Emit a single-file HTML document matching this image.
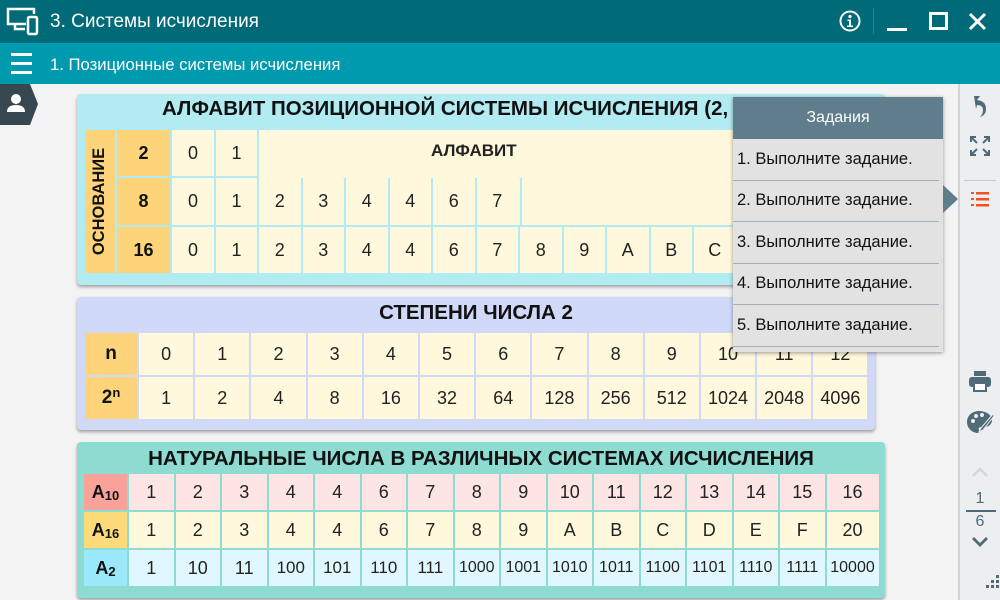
<!DOCTYPE html>
<html><head><meta charset="utf-8"><style>
*{box-sizing:border-box;margin:0;padding:0}
body{width:1000px;height:600px;overflow:hidden;background:#f3f3f3;font-family:"Liberation Sans",sans-serif;position:relative}
.a{position:absolute}
.top{left:0;top:0;width:1000px;height:43px;background:#006a78;color:#fff;font-size:19px}
.sub{left:0;top:43px;width:1000px;height:41px;background:#009aae;color:#fff;font-size:16.7px}
.side{left:958px;top:84px;width:42px;height:516px;background:#eceef0;border-left:2px solid #cfd3d6}
.panel{border-radius:4px;box-shadow:0 2px 3px rgba(0,0,0,.35)}
.ttl{font-weight:bold;font-size:20.5px;text-align:center;color:#111;white-space:nowrap}
.row{display:flex;gap:2px}
.c{background:#fff8dc;display:flex;align-items:center;justify-content:center;font-size:18px;color:#222}
.o{background:#fdd47a;font-weight:bold;color:#111}
sub{font-size:13px;position:relative;top:3px;vertical-align:baseline}
.pop{left:733px;top:97px;width:210px;height:255px;background:#e2e2e2;box-shadow:0 1px 4px rgba(0,0,0,.4)}
.pop .h{height:42px;background:#607d8b;color:#fff;font-size:16px;display:flex;align-items:center;justify-content:center}
.pop .i{height:41.5px;font-size:16.5px;color:#111;padding-left:4px;display:flex;align-items:center;border-bottom:1.5px solid #9fb2ba;margin:0 4px 0 0;white-space:nowrap}
</style></head><body>
<div class="a top">
 <svg class="a" style="left:5px;top:6px" width="34" height="30" viewBox="0 0 34 30" fill="none" stroke="#fff" stroke-width="2.5"><path d="M21 18H3V3h26v5M10 18v5h10"/><rect x="23" y="11" width="9" height="17" rx="1.5"/></svg>
 <span class="a" style="left:50px;top:11px">3. Системы исчисления</span>
 <svg class="a" style="left:839px;top:10px" width="22" height="22" viewBox="0 0 22 22"><circle cx="11" cy="11" r="9.5" fill="none" stroke="#fff" stroke-width="2"/><circle cx="11" cy="6.5" r="1.6" fill="#fff"/><path d="M8.5 9.5h3.5v6h2v1.5h-6v-1.5h2v-4.5h-1.5z" fill="#fff"/></svg>
 <div class="a" style="left:873px;top:8px;width:1px;height:26px;background:#1f8592"></div>
 <div class="a" style="left:887px;top:28px;width:20px;height:3px;background:#fff"></div>
 <div class="a" style="left:929px;top:12px;width:19px;height:18px;border:3px solid #fff"></div>
 <svg class="a" style="left:968px;top:12px" width="19" height="19" viewBox="0 0 19 19" stroke="#fff" stroke-width="3"><path d="M2 2l15 15M17 2L2 17"/></svg>
</div>
<div class="a sub">
 <div class="a" style="left:11px;top:10px;width:21px;height:3px;background:#fff;box-shadow:0 9px 0 #fff,0 18px 0 #fff"></div>
 <span class="a" style="left:50px;top:12px">1. Позиционные системы исчисления</span>
</div>
<svg class="a" style="left:0;top:84px" width="40" height="42"><path d="M0 0H30L38 20L30 41H0z" fill="#37474f"/><circle cx="16" cy="15" r="5" fill="#fff"/><path d="M7 28q0-7 9-7t9 7z" fill="#fff"/></svg>

<!-- panel 1 -->
<div class="a panel" style="left:77px;top:94px;width:808px;height:191px;background:#b2ebf2"></div>
<div class="a ttl" style="left:162px;top:97px">АЛФАВИТ ПОЗИЦИОННОЙ СИСТЕМЫ ИСЧИСЛЕНИЯ (2, 8, 16)</div>
<div class="a c o" style="left:85px;top:130px;width:30px;height:143px"><span style="transform:rotate(-90deg);white-space:nowrap;font-size:16.5px">ОСНОВАНИЕ</span></div>
<div class="a c o" style="left:117px;top:130px;width:53px;height:46px">2</div>
<div class="a c o" style="left:117px;top:178px;width:53px;height:47px">8</div>
<div class="a c o" style="left:117px;top:227px;width:53px;height:46px">16</div>
<div class="a c" style="left:259px;top:130px;width:609px;height:95px;align-items:flex-start;padding-top:11px;font-weight:bold;font-size:17px;justify-content:flex-start;padding-left:172px">АЛФАВИТ</div>
<div class="a row" style="left:172px;top:130px;height:46px"><div class="c" style="width:42px">0</div><div class="c" style="width:41px">1</div></div>
<div class="a row" style="left:172px;top:178px;height:47px;background:#b2ebf2"><div class="c" style="width:42px">0</div><div class="c" style="width:41px">1</div><div class="c" style="width:41.5px">2</div><div class="c" style="width:41.5px">3</div><div class="c" style="width:41.5px">4</div><div class="c" style="width:41.5px">4</div><div class="c" style="width:41.5px">6</div><div class="c" style="width:41.5px">7</div></div>
<div class="a" style="left:520px;top:178px;width:2px;height:47px;background:#b2ebf2"></div>
<div class="a row" style="left:172px;top:227px;height:46px"><div class="c" style="width:42px">0</div><div class="c" style="width:41px">1</div><div class="c" style="width:41.5px">2</div><div class="c" style="width:41.5px">3</div><div class="c" style="width:41.5px">4</div><div class="c" style="width:41.5px">4</div><div class="c" style="width:41.5px">6</div><div class="c" style="width:41.5px">7</div><div class="c" style="width:41.5px">8</div><div class="c" style="width:41.5px">9</div><div class="c" style="width:41.5px">A</div><div class="c" style="width:41.5px">B</div><div class="c" style="width:41.5px">C</div><div class="c" style="width:41.5px">D</div><div class="c" style="width:41.5px">E</div><div class="c" style="width:41.5px">F</div></div>

<!-- panel 2 -->
<div class="a panel" style="left:77px;top:297px;width:798px;height:133px;background:#d0d9f8"></div>
<div class="a ttl" style="left:77px;top:301px;width:798px">СТЕПЕНИ ЧИСЛА 2</div>
<div class="a row" style="left:85px;top:333px;height:42px"><div class="c o" style="width:52px;font-size:19px">n</div><div class="c" style="width:54.2px">0</div><div class="c" style="width:54.2px">1</div><div class="c" style="width:54.2px">2</div><div class="c" style="width:54.2px">3</div><div class="c" style="width:54.2px">4</div><div class="c" style="width:54.2px">5</div><div class="c" style="width:54.2px">6</div><div class="c" style="width:54.2px">7</div><div class="c" style="width:54.2px">8</div><div class="c" style="width:54.2px">9</div><div class="c" style="width:54.2px">10</div><div class="c" style="width:54.2px">11</div><div class="c" style="width:54.2px">12</div></div>
<div class="a row" style="left:85px;top:377px;height:42px"><div class="c o" style="width:52px;font-size:19px">2<span style="font-size:13px;position:relative;top:-6px">n</span></div><div class="c" style="width:54.2px">1</div><div class="c" style="width:54.2px">2</div><div class="c" style="width:54.2px">4</div><div class="c" style="width:54.2px">8</div><div class="c" style="width:54.2px">16</div><div class="c" style="width:54.2px">32</div><div class="c" style="width:54.2px">64</div><div class="c" style="width:54.2px">128</div><div class="c" style="width:54.2px">256</div><div class="c" style="width:54.2px">512</div><div class="c" style="width:54.2px">1024</div><div class="c" style="width:54.2px">2048</div><div class="c" style="width:54.2px">4096</div></div>

<!-- panel 3 -->
<div class="a panel" style="left:77px;top:442px;width:808px;height:156px;background:#8ddbd1"></div>
<div class="a ttl" style="left:77px;top:447px;width:808px">НАТУРАЛЬНЫЕ ЧИСЛА В РАЗЛИЧНЫХ СИСТЕМАХ ИСЧИСЛЕНИЯ</div>
<div class="a row" style="left:84px;top:474px;height:36px"><div class="c o" style="width:43px;background:#f9a29a">A<sub>10</sub></div><div class="c" style="width:44.5px;background:#fde5e5">1</div><div class="c" style="width:44.5px;background:#fde5e5">2</div><div class="c" style="width:44.5px;background:#fde5e5">3</div><div class="c" style="width:44.5px;background:#fde5e5">4</div><div class="c" style="width:44.5px;background:#fde5e5">4</div><div class="c" style="width:44.5px;background:#fde5e5">6</div><div class="c" style="width:44.5px;background:#fde5e5">7</div><div class="c" style="width:44.5px;background:#fde5e5">8</div><div class="c" style="width:44.5px;background:#fde5e5">9</div><div class="c" style="width:44.5px;background:#fde5e5">10</div><div class="c" style="width:44.5px;background:#fde5e5">11</div><div class="c" style="width:44.5px;background:#fde5e5">12</div><div class="c" style="width:44.5px;background:#fde5e5">13</div><div class="c" style="width:44.5px;background:#fde5e5">14</div><div class="c" style="width:44.5px;background:#fde5e5">15</div><div class="c" style="width:52px;background:#fde5e5">16</div></div>
<div class="a row" style="left:84px;top:512px;height:36px"><div class="c o" style="width:43px;background:#fddb7a">A<sub>16</sub></div><div class="c" style="width:44.5px">1</div><div class="c" style="width:44.5px">2</div><div class="c" style="width:44.5px">3</div><div class="c" style="width:44.5px">4</div><div class="c" style="width:44.5px">4</div><div class="c" style="width:44.5px">6</div><div class="c" style="width:44.5px">7</div><div class="c" style="width:44.5px">8</div><div class="c" style="width:44.5px">9</div><div class="c" style="width:44.5px">A</div><div class="c" style="width:44.5px">B</div><div class="c" style="width:44.5px">C</div><div class="c" style="width:44.5px">D</div><div class="c" style="width:44.5px">E</div><div class="c" style="width:44.5px">F</div><div class="c" style="width:52px">20</div></div>
<div class="a row" style="left:84px;top:550px;height:36px"><div class="c o" style="width:43px;background:#9be8fa">A<sub>2</sub></div><div class="c" style="width:44.5px;background:#e0f8fd">1</div><div class="c" style="width:44.5px;background:#e0f8fd">10</div><div class="c" style="width:44.5px;background:#e0f8fd">11</div><div class="c" style="width:44.5px;background:#e0f8fd;font-size:17px">100</div><div class="c" style="width:44.5px;background:#e0f8fd;font-size:17px">101</div><div class="c" style="width:44.5px;background:#e0f8fd;font-size:17px">110</div><div class="c" style="width:44.5px;background:#e0f8fd;font-size:17px">111</div><div class="c" style="width:44.5px;background:#e0f8fd;font-size:16px">1000</div><div class="c" style="width:44.5px;background:#e0f8fd;font-size:16px">1001</div><div class="c" style="width:44.5px;background:#e0f8fd;font-size:16px">1010</div><div class="c" style="width:44.5px;background:#e0f8fd;font-size:16px">1011</div><div class="c" style="width:44.5px;background:#e0f8fd;font-size:16px">1100</div><div class="c" style="width:44.5px;background:#e0f8fd;font-size:16px">1101</div><div class="c" style="width:44.5px;background:#e0f8fd;font-size:16px">1110</div><div class="c" style="width:44.5px;background:#e0f8fd;font-size:16px">1111</div><div class="c" style="width:52px;background:#e0f8fd;font-size:16px">10000</div></div>

<!-- sidebar -->
<div class="a side">
 <svg class="a" style="left:11px;top:10px" width="18" height="24" viewBox="0 0 18 24"><path d="M3 2h6l-3 4q9 1 9 9q0 6-6 8q3-3 3-7q0-5-6-5l-1 4z" fill="#4f6b78"/></svg>
 <svg class="a" style="left:9px;top:51px" width="22" height="22" viewBox="0 0 22 22" stroke="#4f6b78" stroke-width="2" fill="none"><path d="M2 7V2h5M2 2l6 6M20 7V2h-5M20 2l-6 6M2 15v5h5M2 20l6-6M20 15v5h-5M20 20l-6-6"/></svg>
 <div class="a" style="left:4px;top:96px;width:32px;height:1px;background:#c8cdd0"></div>
 <svg class="a" style="left:10px;top:106px" width="20" height="18" viewBox="0 0 20 18" fill="#f4511e"><rect x="6" y="2" width="13" height="2.5"/><rect x="6" y="8" width="13" height="2.5"/><rect x="6" y="14" width="13" height="2.5"/><rect x="1" y="2" width="3" height="2"/><rect x="1" y="8" width="3" height="2"/><rect x="1" y="14" width="3" height="2"/></svg>
 <svg class="a" style="left:8px;top:286px" width="24" height="22" viewBox="0 0 24 22" fill="#4f6b78"><rect x="6" y="1" width="12" height="5"/><rect x="1" y="7" width="22" height="10" rx="3"/><rect x="6" y="13" width="12" height="8" fill="#fff" stroke="#4f6b78" stroke-width="2"/></svg>
 <svg class="a" style="left:6px;top:324px" width="28" height="28" viewBox="0 0 28 28"><path d="M13 3C6 3 1 8 1 14s5 11 11 11c2 0 2-2 1-3s0-3 2-3h3c5 0 8-3 8-7C26 7 20 3 13 3z" fill="#4f6b78"/><circle cx="7" cy="13" r="2" fill="#eceef0"/><circle cx="10" cy="8" r="2" fill="#eceef0"/><circle cx="16" cy="7" r="2" fill="#eceef0"/><path d="M27 6L15 20l-2 4 4-2L28 8z" fill="#4f6b78" stroke="#eceef0" stroke-width="1"/></svg>
 <svg class="a" style="left:11px;top:383px" width="18" height="10" viewBox="0 0 18 10" fill="none" stroke="#d3d7da" stroke-width="2.5"><path d="M2 9l7-7 7 7"/></svg>
 <div class="a" style="left:0;top:406px;width:40px;text-align:center;color:#4f6b78;font-size:16px">1</div>
 <div class="a" style="left:6px;top:426px;width:30px;height:1.5px;background:#4f6b78"></div>
 <div class="a" style="left:0;top:429px;width:40px;text-align:center;color:#4f6b78;font-size:16px">6</div>
 <svg class="a" style="left:11px;top:452px" width="18" height="11" viewBox="0 0 18 11" fill="none" stroke="#4f6b78" stroke-width="2.8"><path d="M2 2l7 7 7-7"/></svg>
 <svg class="a" style="left:26px;top:491px" width="16" height="16" viewBox="0 0 16 16" fill="#4f6b78"><rect x="10" y="0" width="3" height="3"/><rect x="5" y="5" width="3" height="3"/><rect x="10" y="5" width="3" height="3"/><rect x="0" y="10" width="3" height="3"/><rect x="5" y="10" width="3" height="3"/><rect x="10" y="10" width="3" height="3"/></svg>
</div>

<!-- popup -->
<div class="a pop">
 <div class="h">Задания</div>
 <div class="i">1. Выполните задание.</div>
 <div class="i">2. Выполните задание.</div>
 <div class="i">3. Выполните задание.</div>
 <div class="i">4. Выполните задание.</div>
 <div class="i">5. Выполните задание.</div>
</div>
<svg class="a" style="left:943px;top:185px" width="16" height="28"><path d="M0 0L15 14L0 28z" fill="#607d8b"/></svg>
</body></html>
